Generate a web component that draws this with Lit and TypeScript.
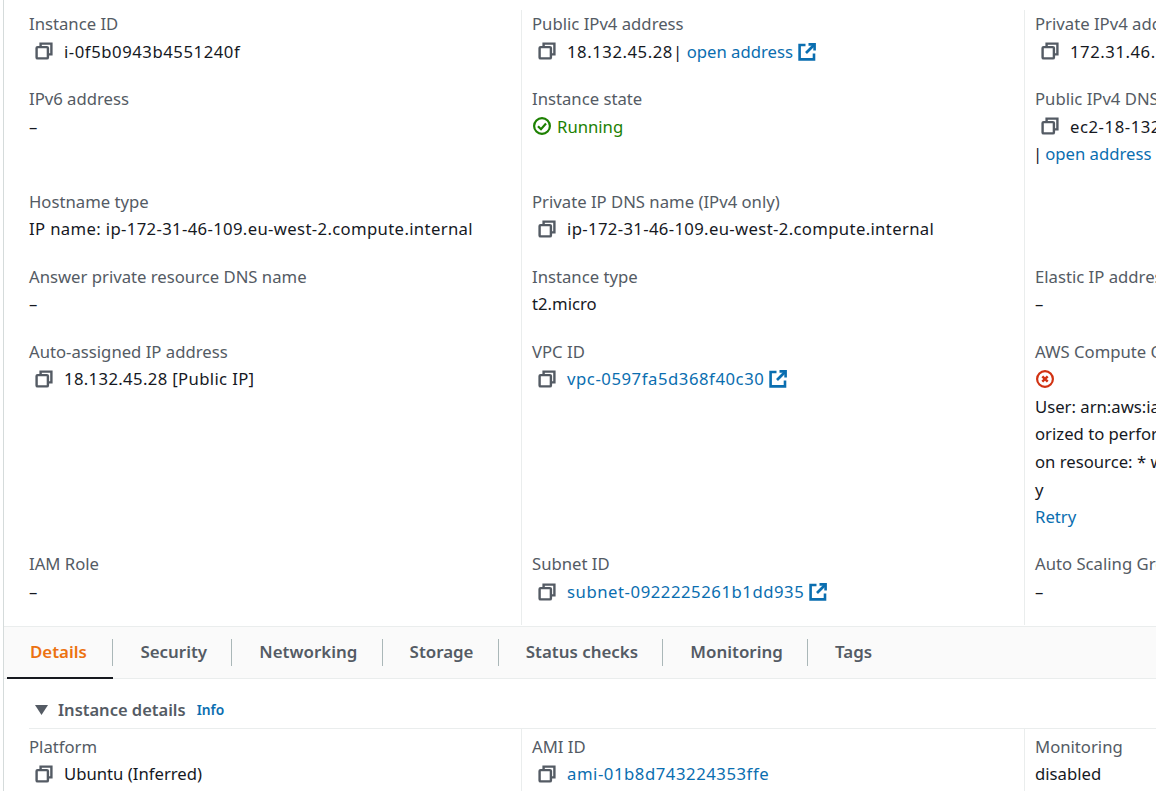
import { LitElement, html, css } from "lit";
import { customElement } from "lit/decorators.js";

const copyIcon = html`<svg class="ico copy" viewBox="0 0 18 18" fill="none" stroke="#545b64" stroke-width="2.4"><rect x="1.6" y="5.1" width="11.3" height="11.3" rx="1"/><path d="M5.6 4.6V1.6h10.8v10.8h-3"/></svg>`;
const extIcon = html`<svg class="ico ext" viewBox="0 0 18 18" fill="none" stroke="#0a6eb0" stroke-width="2.6"><path d="M7.5 2H1.6v14.4H16v-6"/><path d="M8 10 16 2"/><path d="M10.5 1.4h6.1v6.1"/></svg>`;
const okIcon = html`<svg class="ico status" viewBox="0 0 18 18" fill="none" stroke="#1d8102" stroke-width="2.2"><circle cx="9" cy="9" r="7.9"/><path d="M5 9.2l3 3 5-5.6"/></svg>`;
const errIcon = html`<svg class="ico status" viewBox="0 0 18 18" fill="none" stroke="#d13212" stroke-width="2.2"><circle cx="9" cy="9" r="7.9"/><path d="M6.3 6.3l5.4 5.4M11.7 6.3l-5.4 5.4" stroke-width="2.4"/></svg>`;

const tabs = ["Details", "Security", "Networking", "Storage", "Status checks", "Monitoring", "Tags"];

@customElement("app-root")
export class AppRoot extends LitElement {
  static styles = css`
    :host {
      display: block;
      width: 1156px;
      height: 791px;
      overflow: hidden;
      background: #fff;
      font-family: "Noto Sans", "Open Sans", sans-serif;
      font-size: 16.7px;
      line-height: 27.6px;
      color: #16191f;
    }
    .page {
      margin-left: 3px;
      border-left: 1px solid #d5dbdb;
      height: 791px;
      display: flex;
      flex-direction: column;
      width: 1600px;
    }
    .grid {
      display: grid;
      grid-template-columns: 517px 503px 560px;
    }
    .top { padding-top: 10px; height: 606px; box-sizing: border-box; }
    .cell {
      padding: 0 0 19.8px 10px;
      border-left: 1px solid #eaeded;
      white-space: nowrap;
    }
    .cell.first { border-left: none; padding-left: 25px; }
    .label { color: #545b64; }
    .value { display: flex; align-items: center; min-height: 27.6px; }
    .ico { flex: none; display: inline-block; }
    .copy { width: 18px; height: 18px; margin: 0 11px 0 6px; }
    .ext { width: 18px; height: 18px; margin-left: 5px; vertical-align: -3px; }
    .status { width: 18px; height: 18px; margin-right: 6px; margin-left: 1px; }
    a { color: #0a6eb0; text-decoration: none; letter-spacing: 0; }
    .num { letter-spacing: 0.35px; }
    .id { letter-spacing: 0.55px; }
    .bar { margin-right: 4.5px; letter-spacing: 0; }
    .bar.lead { margin: 0 3px 0 -2px; }
    .green { color: #1d8102; }
    .tabs {
      margin-top: 20px;
      height: 53px;
      box-sizing: border-box;
      background: #fafafa;
      border-top: 1px solid #eaeded;
      border-bottom: 1px solid #eaeded;
      display: flex;
      align-items: stretch;
      padding-left: 3px;
      flex: none;
    }
    .tab {
      position: relative;
      display: flex;
      align-items: center;
      padding: 0 25.3px 2px 27px;
      font-weight: 600;
      color: #545b64;
      font-size: 16.9px;
    }
    .tab::after {
      content: "";
      position: absolute;
      right: 0;
      top: 12px;
      height: 27px;
      width: 1px;
      background: #aab7b8;
    }
    .tab:last-child::after { display: none; }
    .tab.active { color: #ec7211; padding-left: 23px; padding-right: 26.5px; }
    .tab.active::before {
      content: "";
      position: absolute;
      left: 0;
      right: 0;
      bottom: -1px;
      height: 2px;
      background: #16191f;
    }
    .section {
      margin-left: 25px;
      height: 50px;
      box-sizing: border-box;
      border-bottom: 1px solid #eaeded;
      display: flex;
      align-items: center;
      padding: 12px 0 0 6px;
      flex: none;
    }
    .tri { width: 13px; height: 10px; margin-right: 10px; flex: none; }
    .section b { font-weight: 600; color: #545b64; font-size: 16.5px; }
    .section a { font-weight: 600; font-size: 13.8px; margin-left: 11px; }
    .bottom { margin-top: -4px; padding-top: 4px; }
    .bottom .cell { padding-top: 4px; }
    .bottom .label { height: 27px; }
  `;

  private cell(label: string, body: unknown, first = false) {
    return html`<div class="cell ${first ? "first" : ""}"><div class="label">${label}</div>${body}</div>`;
  }

  private plain(v: string) {
    return html`<div>${v}</div>`;
  }

  private copyVal(body: unknown, cls = "") {
    return html`<div class="value">${copyIcon}<span class=${cls}>${body}</span></div>`;
  }

  render() {
    return html`<div class="page">
      <div class="grid top">
        ${this.cell("Instance ID", this.copyVal("i-0f5b0943b4551240f", "id"), true)}
        ${this.cell("Public IPv4 address", this.copyVal(html`18.132.45.28<span class="bar">|</span><a href="#">open address${extIcon}</a>`, "id"))}
        ${this.cell("Private IPv4 addresses", this.copyVal("172.31.46.109", "id"))}

        ${this.cell("IPv6 address", this.plain("–"), true)}
        ${this.cell("Instance state", html`<div class="value green">${okIcon}<span>Running</span></div>`)}
        ${this.cell("Public IPv4 DNS", html`${this.copyVal("ec2-18-132-45-28.eu-west-2.compute.amazonaws.com", "id")}<div><span class="bar lead">|</span><a href="#">open address${extIcon}</a></div>`)}

        ${this.cell("Hostname type", html`<div class="num">IP name: ip-172-31-46-109.eu-west-2.compute.internal</div>`, true)}
        ${this.cell("Private IP DNS name (IPv4 only)", this.copyVal("ip-172-31-46-109.eu-west-2.compute.internal", "num"))}
        ${this.cell("", "")}

        ${this.cell("Answer private resource DNS name", this.plain("–"), true)}
        ${this.cell("Instance type", this.plain("t2.micro"))}
        ${this.cell("Elastic IP addresses", this.plain("–"))}

        ${this.cell("Auto-assigned IP address", this.copyVal("18.132.45.28 [Public IP]", "num"), true)}
        ${this.cell("VPC ID", this.copyVal(html`<a class="id" href="#">vpc-0597fa5d368f40c30${extIcon}</a>`))}
        ${this.cell("AWS Compute Optimizer finding", html`<div class="value">${errIcon}</div>
          <div>User: arn:aws:iam::account:user/console is not auth</div>
          <div>orized to perform: compute-optimizer:GetEnrollment</div>
          <div>on resource: * with an explicit deny in a polic</div>
          <div>y</div>
          <div><a href="#">Retry</a></div>`)}

        ${this.cell("IAM Role", this.plain("–"), true)}
        ${this.cell("Subnet ID", this.copyVal(html`<a class="id" href="#">subnet-0922225261b1dd935${extIcon}</a>`))}
        ${this.cell("Auto Scaling Group name", this.plain("–"))}
      </div>
      <div class="tabs">
        ${tabs.map((t, i) => html`<div class="tab ${i === 0 ? "active" : ""}">${t}</div>`)}
      </div>
      <div class="section">
        <svg class="tri" viewBox="0 0 13 10"><path d="M0 0h13L6.5 10z" fill="#545b64"/></svg>
        <b>Instance details</b><a href="#">Info</a>
      </div>
      <div class="grid bottom">
        ${this.cell("Platform", this.copyVal("Ubuntu (Inferred)"), true)}
        ${this.cell("AMI ID", this.copyVal(html`<a class="id" href="#">ami-01b8d743224353ffe</a>`))}
        ${this.cell("Monitoring", this.plain("disabled"))}
      </div>
    </div>`;
  }
}
